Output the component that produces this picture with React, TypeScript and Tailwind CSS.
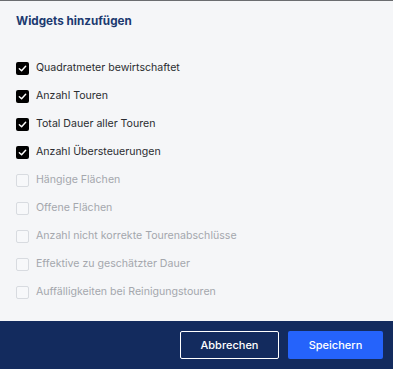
import React from "react";

const items: { label: string; checked: boolean }[] = [
  { label: "Quadratmeter bewirtschaftet", checked: true },
  { label: "Anzahl Touren", checked: true },
  { label: "Total Dauer aller Touren", checked: true },
  { label: "Anzahl Übersteuerungen", checked: true },
  { label: "Hängige Flächen", checked: false },
  { label: "Offene Flächen", checked: false },
  { label: "Anzahl nicht korrekte Tourenabschlüsse", checked: false },
  { label: "Effektive zu geschätzter Dauer", checked: false },
  { label: "Auffälligkeiten bei Reinigungstouren", checked: false },
];

export default function App() {
  return (
    <div
      className="w-[393px] h-[369px] flex flex-col bg-[#f5f6f8] border-t border-[#6b6d70]"
      style={{ fontFamily: "Inter, 'Noto Sans', sans-serif" }}
    >
      <div className="flex-1 flex flex-col px-4">
        <h2 className="mt-[11px] text-[11.7px] leading-[18px] font-bold text-[#1c3a70]">
          Widgets hinzufügen
        </h2>
        <div className="mt-[24px] flex flex-col">
          {items.map((it) => (
            <div key={it.label} className="h-[28px] flex items-center gap-[7px]">
              {it.checked ? (
                <div className="w-[13px] h-[13px] rounded-[2px] bg-black flex items-center justify-center">
                  <svg width="9" height="9" viewBox="0 0 10 10">
                    <path d="M1.5 5.2 L4 7.5 L8.5 2.5" stroke="white" strokeWidth="1.6" fill="none" strokeLinecap="round" strokeLinejoin="round" />
                  </svg>
                </div>
              ) : (
                <div className="w-[13px] h-[13px] rounded-[2px] border border-[#d8dbe0] bg-[#f7f8fa]" />
              )}
              <span
                className={
                  "text-[10.6px] leading-[14px] " +
                  (it.checked ? "text-[#2b2d31]" : "text-[#a4a7ad]")
                }
              >
                {it.label}
              </span>
            </div>
          ))}
        </div>
      </div>
      <div className="h-[48px] bg-[#132b5e] flex items-center justify-end gap-[9px] pr-[10px]">
        <button className="w-[99px] h-[28px] border border-white rounded-[2px] text-white text-[11px] font-medium">
          Abbrechen
        </button>
        <button className="w-[95px] h-[28px] bg-[#2563fb] rounded-[2px] text-white text-[11px] font-medium">
          Speichern
        </button>
      </div>
    </div>
  );
}
